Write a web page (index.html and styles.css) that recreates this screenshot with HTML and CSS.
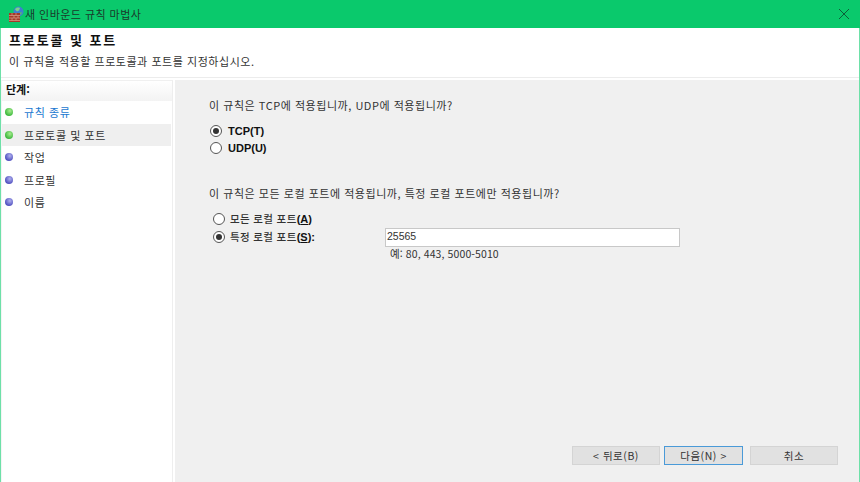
FILE: index.html
```html
<!DOCTYPE html>
<html lang="ko">
<head>
<meta charset="utf-8">
<title>새 인바운드 규칙 마법사</title>
<link rel="stylesheet" href="styles.css">
</head>
<body>
<div class="window">
  <header class="titlebar">
    <svg class="app-icon" width="16" height="16" viewBox="0 0 16 16">
      <circle cx="10.5" cy="5.5" r="5" fill="#3f7fd0"/>
      <path d="M7 3.5c1-2 3-2.500 5-1.500l-1 2.500-2 1z" fill="#7ed08a"/>
      <path d="M11 7l3-1-1 3z" fill="#5fb86f"/>
      <rect x="1" y="7" width="11" height="9" fill="#a33a28"/>
      <path d="M1 9.500h11M1 12h11M1 14.500h11M4 7v2.500M8 7v2.500M6 9.500V12M10 9.500V12M4 12v2.500M8 12v2.500" stroke="#d8a08c" stroke-width=".7" fill="none"/>
    </svg>
    <span class="title-text">새 인바운드 규칙 마법사</span>
    <svg class="close-icon" width="10" height="10" viewBox="0 0 10 10">
      <path d="M0 0l10 10M10 0L0 10" stroke="#0b5f38" stroke-width="1" fill="none"/>
    </svg>
  </header>
  <section class="page-head">
    <h1 class="page-title">프로토콜 및 포트</h1>
    <p class="page-desc">이 규칙을 적용할 프로토콜과 포트를 지정하십시오.</p>
  </section>
  <div class="content">
    <nav class="steps">
      <div class="steps-head">단계:</div>
      <ul class="step-list">
        <li class="step"><span class="dot dot-green"></span><span class="step-link">규칙 종류</span></li>
        <li class="step step-current"><span class="dot dot-green"></span>프로토콜 및 포트</li>
        <li class="step"><span class="dot dot-blue"></span>작업</li>
        <li class="step"><span class="dot dot-blue"></span>프로필</li>
        <li class="step"><span class="dot dot-blue"></span>이름</li>
      </ul>
    </nav>
    <main class="panel">
      <p class="question q1">이 규칙은 TCP에 적용됩니까, UDP에 적용됩니까?</p>
      <div class="radio-group g1">
        <label class="radio-row strong"><span class="radio checked"></span>TCP(T)</label>
        <label class="radio-row strong"><span class="radio"></span>UDP(U)</label>
      </div>
      <p class="question q2">이 규칙은 모든 로컬 포트에 적용됩니까, 특정 로컬 포트에만 적용됩니까?</p>
      <div class="radio-group g2">
        <label class="radio-row local"><span class="radio"></span>모든 로컬 포트<b class="key">(<u>A</u>)</b></label>
        <div class="port-row">
          <label class="radio-row local port-label"><span class="radio checked"></span>특정 로컬 포트<b class="key">(<u>S</u>):</b></label>
          <div class="port-field">
            <div class="port-input">25565</div>
            <div class="port-hint">예: 80, 443, 5000-5010</div>
          </div>
        </div>
      </div>
      <div class="buttons">
        <button class="btn btn-back">&lt; 뒤로(B)</button>
        <button class="btn btn-next">다음(N) &gt;</button>
        <button class="btn btn-cancel">취소</button>
      </div>
    </main>
  </div>
</div>
</body>
</html>
```
FILE: styles.css
```css
* { box-sizing: border-box; }
html, body { margin: 0; height: 100%; }
body {
  font-family: "Noto Sans CJK KR", "Liberation Sans", sans-serif;
  font-size: 11px;
  color: #222;
  background: #fff;
  overflow: hidden;
}
.window {
  width: 860px;
  height: 482px;
  display: flex;
  flex-direction: column;
  border-left: 1px solid #6ee0a8;
  border-right: 1px solid #6ee0a8;
}
.titlebar {
  height: 28px;
  margin: 0 -1px;
  flex: none;
  background: #0ac96c;
  display: flex;
  align-items: center;
  padding: 0 11px 0 8px;
}
.app-icon { flex: none; margin-right: 1px; }
.title-text { color: #1a3a2a; font-size: 11px; letter-spacing: .45px; }
.close-icon { margin-left: auto; }
.page-head {
  height: 50px;
  flex: none;
  padding: 3px 0 0 8px;
  border-bottom: 1px solid #ececec;
  background: #fff;
}
.page-title {
  margin: 0;
  font-size: 13px;
  font-weight: 700;
  line-height: 18px;
  letter-spacing: 1.9px;
  color: #111;
}
.page-desc {
  margin: 4px 0 0;
  font-size: 11px;
  line-height: 16px;
  letter-spacing: .54px;
  color: #333;
}
.content {
  flex: 1;
  display: flex;
  padding-top: 2px;
  min-height: 0;
  background: #fff;
}
.steps {
  width: 172px;
  flex: none;
  border-top: 1px solid #f0f0f0;
  border-right: 1px solid #eee;
  border-left: 1px solid #f4f4f4;
}
.steps-head {
  height: 20px;
  padding-left: 4px;
  font-weight: 700;
  font-size: 11px;
  line-height: 17px;
  color: #111;
  background: linear-gradient(#fff, #f3f3f3);
}
.step-list { list-style: none; margin: 0; padding: 0; }
.step {
  height: 22.500px;
  display: flex;
  align-items: center;
  padding-left: 3px;
  font-size: 11px;
  letter-spacing: .55px;
  color: #333;
}
.step-current { background: #efefef; margin-right: 1px; }
.step-link { color: #1a78d0; }
.dot {
  width: 8px;
  height: 8px;
  border-radius: 50%;
  margin-right: 11px;
  flex: none;
}
.dot-green { background: radial-gradient(circle at 60% 35%, #a8ec90, #3cb83c 70%); }
.dot-blue { background: radial-gradient(circle at 60% 35%, #b0b0ee, #5050c0 70%); }
.panel {
  flex: 1;
  background: #f0f0f0;
  margin-left: 2px;
  display: flex;
  flex-direction: column;
  padding: 17px 20px 17px 34px;
  min-width: 0;
}
.question {
  margin: 0;
  font-size: 11px;
  line-height: 16px;
  letter-spacing: .53px;
  color: #333;
}
.g1 { margin: 9px 0 0 1px; }
.q2 { margin-top: 29px; }
.g2 { margin: 9px 0 0 4px; }
.radio-row {
  display: flex;
  align-items: center;
  height: 17px;
}
.strong { font-weight: 700; font-family: "Liberation Sans", sans-serif; font-size: 11px; color: #111; }
.local { font-size: 10.500px; font-weight: 500; letter-spacing: .35px; color: #333; }
.key { font-weight: 700; font-family: "Liberation Sans", sans-serif; font-size: 11px; color: #111; letter-spacing: 0; }
.radio {
  width: 12px;
  height: 12px;
  border-radius: 50%;
  border: 1px solid #555;
  background: #fff;
  margin-right: 5px;
  flex: none;
  display: flex;
  align-items: center;
  justify-content: center;
}
.strong .radio { margin-right: 6px; }
.checked::after {
  content: "";
  width: 6px;
  height: 6px;
  border-radius: 50%;
  background: #333;
}
.port-row { display: flex; margin-top: 1px; }
.port-label { width: 172px; }
.port-input {
  width: 295px;
  height: 19px;
  background: #fff;
  border: 1px solid #c8c8c8;
  font-family: "Liberation Sans", sans-serif;
  font-size: 10.500px;
  line-height: 15px;
  padding-left: 1px;
  color: #333;
}
.port-hint {
  font-size: 10.500px;
  line-height: 14px;
  padding-left: 5px;
  letter-spacing: .1px;
  color: #333;
}
.buttons {
  margin-top: auto;
  margin-right: 1px;
  display: flex;
  justify-content: flex-end;
  gap: 4px;
}
.btn {
  height: 19px;
  font: inherit;
  font-size: 10.500px;
  line-height: 15px;
  padding: 0;
  letter-spacing: .55px;
  color: #333;
  background: #e1e1e1;
  border: 1px solid #d4d4d4;
}
.btn-back { width: 88px; }
.btn-next { width: 79px; border: 1px solid #4a9ad8; margin-right: 3px; }
.btn-cancel { width: 88px; }
```
